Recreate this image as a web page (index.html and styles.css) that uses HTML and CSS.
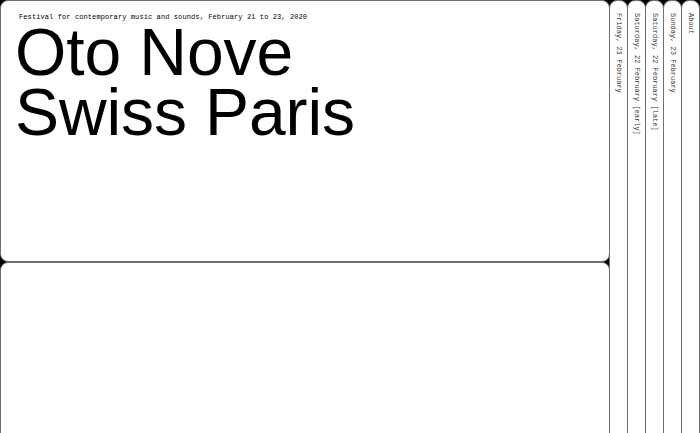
FILE: index.html
```html
<!DOCTYPE html>
<html lang="en">
<head>
<meta charset="utf-8">
<title>Oto Nove Swiss Paris</title>
<link rel="stylesheet" href="styles.css">
</head>
<body>
<div class="page">
  <main class="main">
    <section class="card card-top">
      <p class="subtitle">Festival for contemporary music and sounds, February 21 to 23, 2020</p>
      <h1 class="title">Oto Nove<br>Swiss Paris</h1>
    </section>
    <section class="card card-bottom"></section>
  </main>
  <nav class="tabs">
    <div class="tab"><span class="tab-label">Friday, 21 February</span></div>
    <div class="tab"><span class="tab-label">Saturday, 22 February [early]</span></div>
    <div class="tab"><span class="tab-label">Saturday, 22 February [late]</span></div>
    <div class="tab"><span class="tab-label">Sunday, 23 February</span></div>
    <div class="tab"><span class="tab-label">About</span></div>
  </nav>
</div>
</body>
</html>
```
FILE: styles.css
```css
* { box-sizing: border-box; }
html, body {
  margin: 0;
  padding: 0;
  background: #000;
  height: 100%;
  overflow: hidden;
}
.page {
  display: flex;
  height: 100vh;
}
.main {
  width: 610px;
  display: flex;
  flex-direction: column;
}
.card {
  background: #fff;
  border: 1px solid #707070;
  border-radius: 8px;
}
.card-top {
  height: 262px;
  padding: 12px 12px 0 14px;
}
.card-bottom {
  flex: 1;
  margin-bottom: -20px;
}
.subtitle {
  margin: 0 0 0 4px;
  font-family: "Liberation Mono", "DejaVu Sans Mono", monospace;
  font-size: 7px;
  line-height: 9px;
  letter-spacing: 0.1px;
  font-weight: 400;
  color: #000;
  white-space: nowrap;
}
.title {
  margin: 0;
  font-family: "Liberation Sans", Arial, sans-serif;
  font-weight: 400;
  font-size: 66px;
  line-height: 60px;
  letter-spacing: -0.1px;
  color: #000;
}
.tabs {
  display: flex;
  flex: 1;
}
.tab {
  width: 19px;
  margin-left: -1px;
  margin-bottom: -20px;
  background: #fff;
  border: 1px solid #707070;
  border-radius: 8px 8px 0 0;
  display: flex;
  justify-content: center;
  padding-top: 12px;
}
.tab-label {
  writing-mode: vertical-rl;
  font-family: "Liberation Mono", "DejaVu Sans Mono", monospace;
  font-size: 7px;
  line-height: 9px;
  color: #333;
  white-space: nowrap;
}
```
